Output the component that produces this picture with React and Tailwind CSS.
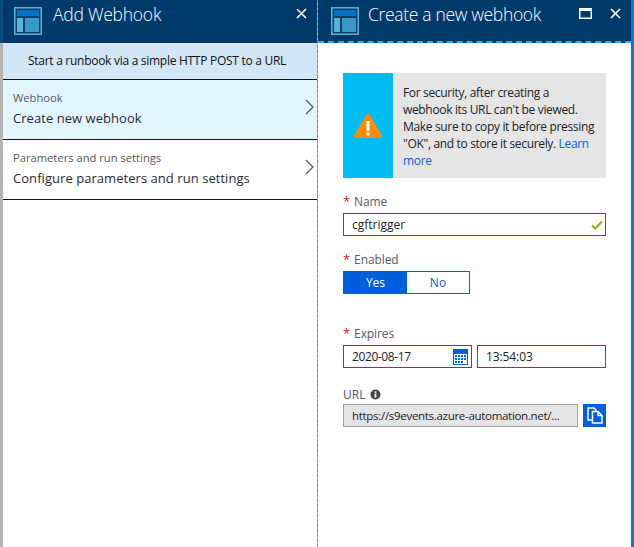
const font = { fontFamily: '"Open Sans", "Noto Sans", sans-serif' };

function BladeIcon() {
  return (
    <svg width="28" height="28" viewBox="0 0 28 28" className="shrink-0">
      <rect x="0" y="0" width="28" height="28" fill="#59b4d9" />
      <rect x="1.5" y="1.5" width="25" height="25" fill="#0f3f6b" />
      <rect x="3" y="3" width="22" height="6" fill="#0072c6" />
      <rect x="3" y="11" width="6" height="14" fill="#59b4d9" />
      <rect x="11" y="11" width="14" height="14" fill="#3999c6" />
    </svg>
  );
}

function CloseIcon() {
  return (
    <svg width="11" height="11" viewBox="0 0 11 11">
      <path d="M1 1 L10 10 M10 1 L1 10" stroke="#ffffff" strokeWidth="1.6" fill="none" />
    </svg>
  );
}

function Chevron() {
  return (
    <svg width="9" height="16" viewBox="0 0 9 16" className="absolute right-[3px] top-[19px]">
      <path d="M1 1 L8 8 L1 15" stroke="#555555" strokeWidth="1.2" fill="none" />
    </svg>
  );
}

function Star() {
  return <span className="text-[#e81123] mr-[4px] text-[13px]">*</span>;
}

function MenuItem({ label, value, bg }) {
  return (
    <div className={`relative h-[60px] border-b border-[#111111] pl-[10px] pt-[10px] ${bg}`}>
      <div className="text-[11.2px] leading-[16px] text-[#59595f]">{label}</div>
      <div className="text-[13px] leading-[18px] mt-[3px] tracking-[0.05px] text-[#2b2b33]">{value}</div>
      <Chevron />
    </div>
  );
}

export default function App() {
  return (
    <div className="w-[634px] h-[547px] flex bg-white overflow-hidden" style={font}>
      <div className="w-[3px] h-full flex flex-col">
        <div className="h-[43px] bg-[#0b4f82]" />
        <div className="flex-1 bg-[#b4b4b4]" />
      </div>

      <div className="w-[314px] flex flex-col">
        <div className="h-[43px] bg-[#003a6b] flex items-start pl-[11px] pt-[7px] relative">
          <BladeIcon />
          <div className="ml-[11px] -mt-[3px] text-[17.5px] leading-[20px] text-white tracking-[-0.25px] font-light">Add Webhook</div>
          <div className="absolute right-[10px] top-[8px]"><CloseIcon /></div>
        </div>
        <div className="h-[37px] bg-[#d2e6f6] border-b border-[#111111] flex items-center justify-center text-[12px] tracking-[-0.28px] text-[#111111] pr-[6px]">
          Start a runbook via a simple HTTP POST to a URL
        </div>
        <MenuItem label="Webhook" value="Create new webhook" bg="bg-[#e3f6ff]" />
        <MenuItem label="Parameters and run settings" value="Configure parameters and run settings" bg="bg-white" />
      </div>

      <div className="w-[1px] h-full bg-[#b4b4b4] border-l border-dashed border-[#2aa7e0]" />

      <div className="w-[313px] flex flex-col">
        <div className="h-[43px] bg-[#003a6b] border-b-2 border-dashed border-[#1eb4ee] flex items-start pl-[13px] pt-[7px] relative">
          <BladeIcon />
          <div className="ml-[9px] -mt-[3px] text-[17.5px] leading-[20px] text-white tracking-[-0.33px] font-light">Create a new webhook</div>
          <svg width="13" height="11" viewBox="0 0 13 11" className="absolute right-[39px] top-[8px]">
            <rect x="0.75" y="0.75" width="11.5" height="9.5" fill="none" stroke="#ffffff" strokeWidth="1.5" />
            <rect x="0" y="0" width="13" height="3" fill="#ffffff" />
          </svg>
          <div className="absolute right-[10px] top-[8px]"><CloseIcon /></div>
        </div>

        <div className="pl-[25px] pr-[25px] pt-[30px] text-[12px] text-[#111111]">
          <div className="flex h-[105px] bg-[#e5e5e5]">
            <div className="w-[50px] bg-[#00bcf2] flex items-center justify-center">
              <svg width="30" height="28" viewBox="0 0 30 28">
                <path d="M15 2 L28.5 25 H1.5 Z" fill="#ff8c00" stroke="#ff8c00" strokeWidth="2" strokeLinejoin="round" />
                <rect x="13.5" y="9" width="3" height="10" fill="#ffffff" />
                <rect x="13.5" y="20.5" width="3" height="3" fill="#ffffff" />
              </svg>
            </div>
            <div className="pl-[10px] pt-[11px] flex-1 whitespace-nowrap text-[12px] leading-[17px] tracking-[-0.34px] text-[#222229]">
              For security, after creating a<br />
              webhook its URL can't be viewed.<br />
              Make sure to copy it before pressing<br />
              "OK", and to store it securely. <span className="text-[#0f5fdc]">Learn<br />more</span>
            </div>
          </div>

          <div className="mt-[15px] h-[20px] leading-[16px] text-[#59595f] tracking-[-0.1px]"><Star />Name</div>
          <div className="h-[23px] border border-[#7a2f96] flex items-center justify-between pl-[8px] pr-[2px] text-[#222229] text-[12px]">
            <span>cgftrigger</span>
            <svg width="12" height="10" viewBox="0 0 12 10">
              <path d="M1 5.5 L4.2 8.5 L11 1.5" stroke="#7fba00" strokeWidth="2" fill="none" />
            </svg>
          </div>

          <div className="mt-[15px] h-[20px] leading-[16px] text-[#59595f] tracking-[-0.1px]"><Star />Enabled</div>
          <div className="w-[127px] h-[23px] border border-[#0060dc] flex text-[12px]">
            <div className="w-[63px] bg-[#0060dc] text-white flex items-center justify-center">Yes</div>
            <div className="flex-1 text-[#0060dc] flex items-center justify-center">No</div>
          </div>

          <div className="mt-[31px] h-[20px] leading-[16px] text-[#59595f] tracking-[-0.1px]"><Star />Expires</div>
          <div className="flex gap-[5px] h-[23px] text-[#222229]">
            <div className="w-[129px] border border-[#7a2f96] flex items-center justify-between pl-[8px] pr-[3px]">
              <span className="tracking-[-0.4px]">2020-08-17</span>
              <svg width="15" height="16" viewBox="0 0 15 16">
                <rect x="0" y="0" width="15" height="16" fill="#0060dc" />
                <rect x="1" y="5" width="13" height="10" fill="#ffffff" />
                <g fill="#0060dc">
                  <rect x="2" y="6" width="2" height="2" /><rect x="5" y="6" width="2" height="2" /><rect x="8" y="6" width="2" height="2" /><rect x="11" y="6" width="2" height="2" />
                  <rect x="2" y="9" width="2" height="2" /><rect x="5" y="9" width="2" height="2" /><rect x="8" y="9" width="2" height="2" /><rect x="11" y="9" width="2" height="2" />
                  <rect x="2" y="12" width="2" height="2" /><rect x="5" y="12" width="2" height="2" /><rect x="8" y="12" width="2" height="2" />
                </g>
              </svg>
            </div>
            <div className="w-[129px] border border-[#7a2f96] flex items-center pl-[8px] tracking-[-0.1px]">13:54:03</div>
          </div>

          <div className="mt-[17px] h-[19px] leading-[19px] text-[#59595f] flex items-center">
            URL
            <svg width="11" height="11" viewBox="0 0 11 11" className="ml-[5px]">
              <circle cx="5.5" cy="5.5" r="5" fill="#444444" />
              <rect x="4.6" y="4.6" width="1.8" height="4" fill="#ffffff" />
              <rect x="4.6" y="2.3" width="1.8" height="1.6" fill="#ffffff" />
            </svg>
          </div>
          <div className="flex gap-[5px] h-[23px]">
            <div className="w-[235px] bg-[#e5e5e5] border border-[#a0a0a0] flex items-center pl-[8px] text-[#222229] text-[11.5px] tracking-[-0.3px] whitespace-nowrap overflow-hidden">
              https://s9events.azure-automation.net/...
            </div>
            <div className="w-[23px] bg-[#0060dc] flex items-center justify-center">
              <svg width="16" height="17" viewBox="0 0 16 17" fill="none" stroke="#ffffff" strokeWidth="1.5">
                <path d="M1 1 H7 L9 3 V13 H1 Z" />
                <path d="M5.5 4.5 H11 L15 8.5 V16 H5.5 Z" fill="#0060dc" />
                <path d="M11 4.5 V8.5 H15" />
              </svg>
            </div>
          </div>
        </div>
      </div>

      <div className="w-[3px] h-full bg-[#0f78c8]" />
    </div>
  );
}
